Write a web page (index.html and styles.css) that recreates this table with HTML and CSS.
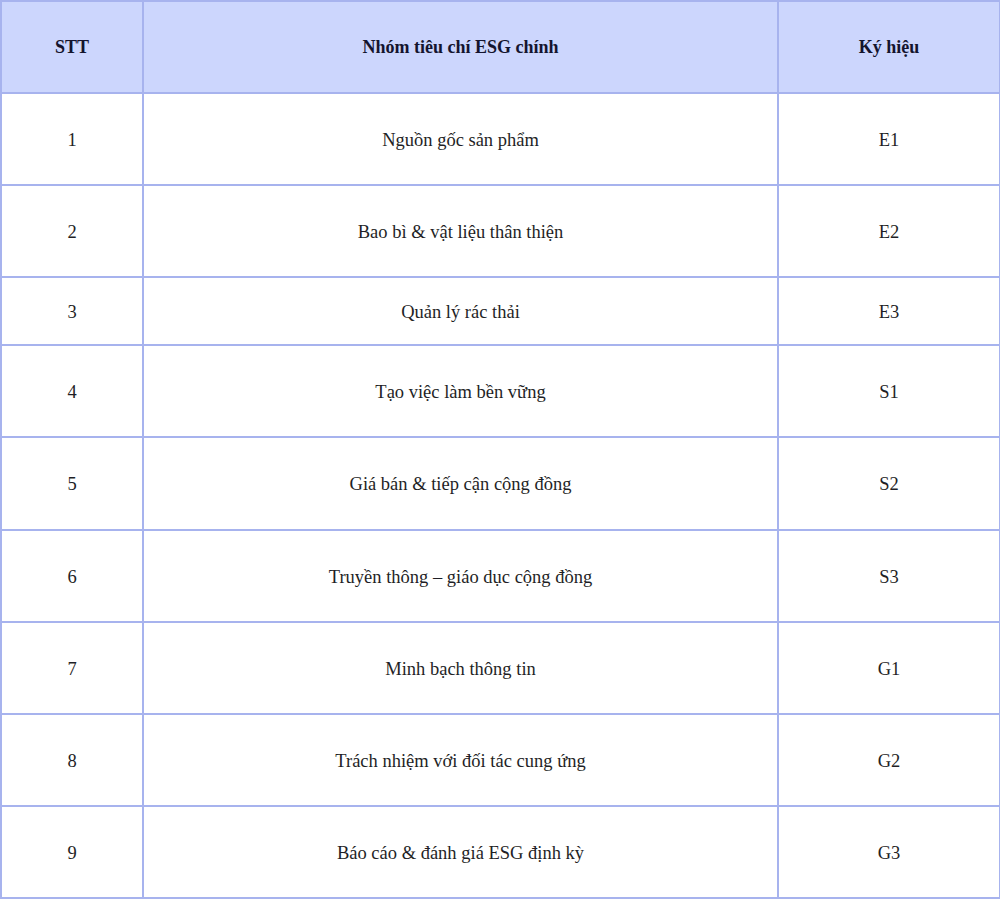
FILE: index.html
```html
<!DOCTYPE html>
<html lang="vi">
<head>
<meta charset="utf-8">
<title>Nhóm tiêu chí ESG</title>
<link rel="stylesheet" href="styles.css">
</head>
<body>
<table class="esg">
  <colgroup>
    <col class="c-stt">
    <col class="c-name">
    <col class="c-code">
  </colgroup>
  <thead>
    <tr class="row">
      <th>STT</th>
      <th>Nhóm tiêu chí ESG chính</th>
      <th>Ký hiệu</th>
    </tr>
  </thead>
  <tbody>
    <tr class="row"><td>1</td><td>Nguồn gốc sản phẩm</td><td>E1</td></tr>
    <tr class="row"><td>2</td><td>Bao bì &amp; vật liệu thân thiện</td><td>E2</td></tr>
    <tr class="row short"><td>3</td><td>Quản lý rác thải</td><td>E3</td></tr>
    <tr class="row"><td>4</td><td>Tạo việc làm bền vững</td><td>S1</td></tr>
    <tr class="row tall"><td>5</td><td>Giá bán &amp; tiếp cận cộng đồng</td><td>S2</td></tr>
    <tr class="row"><td>6</td><td>Truyền thông – giáo dục cộng đồng</td><td>S3</td></tr>
    <tr class="row"><td>7</td><td>Minh bạch thông tin</td><td>G1</td></tr>
    <tr class="row"><td>8</td><td>Trách nhiệm với đối tác cung ứng</td><td>G2</td></tr>
    <tr class="row"><td>9</td><td>Báo cáo &amp; đánh giá ESG định kỳ</td><td>G3</td></tr>
  </tbody>
</table>
</body>
</html>
```
FILE: styles.css
```css
html, body {
  margin: 0;
  padding: 0;
  background: #ffffff;
}
.esg {
  width: 999px;
  border-collapse: collapse;
  table-layout: fixed;
  font-family: "Liberation Serif", "DejaVu Serif", serif;
  font-size: 18.5px;
  color: #1f1f26;
}
.c-stt { width: 142px; }
.c-name { width: 635px; }
.c-code { width: 222px; }
.esg th, .esg td {
  border: 2px solid #a7b3ee;
  text-align: center;
  vertical-align: middle;
  padding: 2px 0 0;
}
.esg th {
  background: #ccd6fd;
  color: #14142e;
  font-weight: 700;
  font-size: 18px;
  padding: 0;
}
.row { height: 92px; }
.row.short { height: 68px; }
.row.tall { height: 93px; }
```
